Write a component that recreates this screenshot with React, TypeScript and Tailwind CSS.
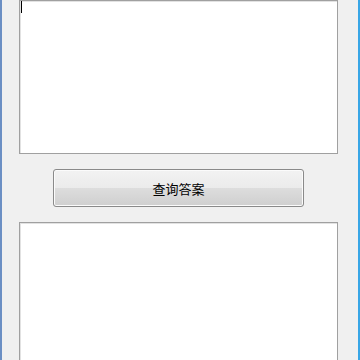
export default function App() {
  return (
    <div className="flex h-[360px] w-[360px] flex-col overflow-hidden border-l-2 border-r-2 border-l-[#6b8fc4] border-r-[#38a6e6] bg-[#f0f0f0] pl-[17px] pr-[19px] font-['Liberation_Sans','Noto_Sans_CJK_SC',sans-serif]">
      <div className="relative h-[154px] w-[319px] shrink-0 border border-[#a0a0a0] bg-white shadow-[inset_1px_1px_0_#e2e2e2]">
        <div className="absolute left-[1px] top-0 h-[12px] w-[1px] bg-black" />
      </div>
      <button className="mx-[34px] mt-[15px] flex h-[38px] w-[251px] shrink-0 items-center justify-center rounded-[3px] border border-[#8a8a8a] bg-[linear-gradient(#f2f2f2_0%,#ebebeb_50%,#dddddd_50%,#cfcfcf_100%)] pt-[3px] text-[13px] text-black shadow-[inset_0_0_0_1px_#fbfbfb]">
        查询答案
      </button>
      <div className="mt-[15px] h-[160px] w-[319px] shrink-0 border border-[#a0a0a0] bg-white shadow-[inset_1px_1px_0_#e2e2e2]" />
    </div>
  )
}
